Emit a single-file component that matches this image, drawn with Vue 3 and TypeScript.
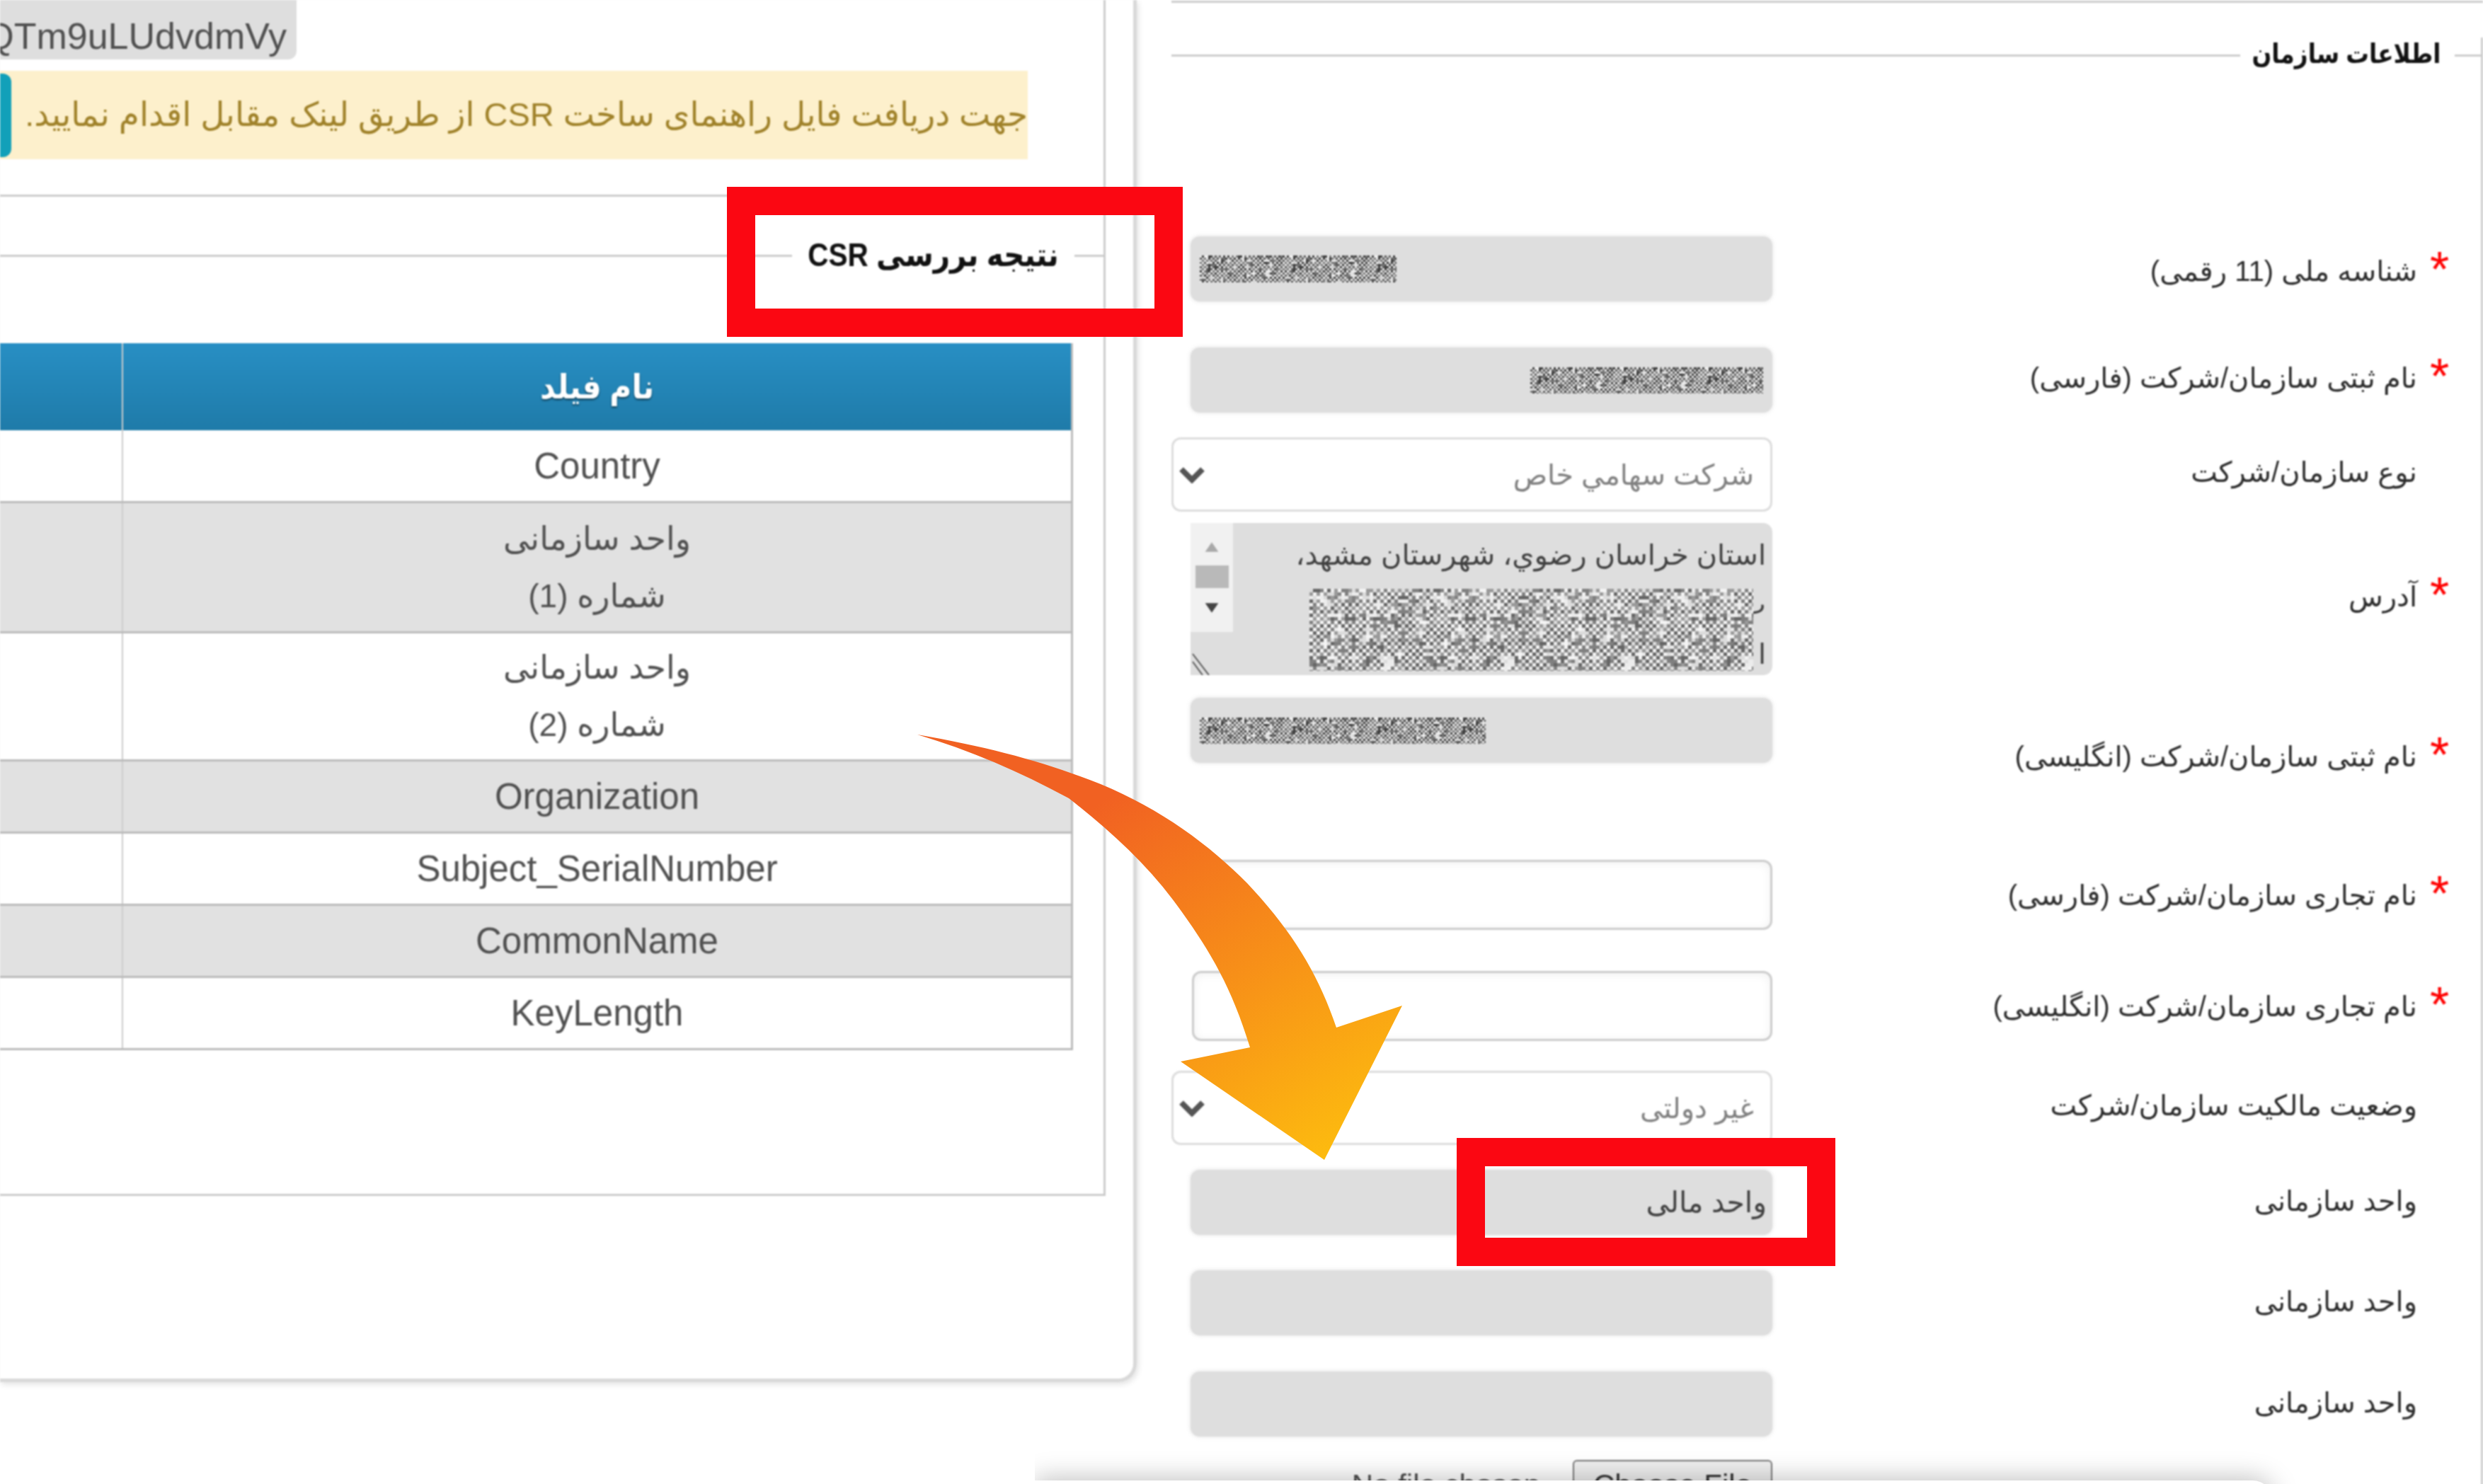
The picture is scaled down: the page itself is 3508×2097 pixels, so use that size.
<script setup lang="ts">
function noise(cols: number, rows: number, cell: number, seed: number, dark: string[], light: string[]) {
  let s = seed
  const next = () => {
    s = (s * 1664525 + 1013904223) >>> 0
    return (s >>> 8) / 16777216
  }
  const out: { x: number; y: number; w: number; c: string }[] = []
  for (let r = 0; r < rows; r++) {
    for (let c = 0; c < cols; c++) {
      const odd = (r + c) % 2 === 1
      const flip = next() < 0.12
      const set = odd !== flip ? dark : light
      out.push({ x: c * cell, y: r * cell, w: cell, c: set[Math.floor(next() * set.length)] })
    }
  }
  return out
}
const fine = noise(40, 19, 3, 11, ['#3a3a3a', '#5a5a5a', '#777'], ['#e8e8e8', '#d0d0d0', '#f2f2f2'])
const coarse = noise(34, 34, 5, 37, ['#666', '#808080', '#9a9a9a'], ['#ececec', '#dcdcdc', '#f4f4f4'])

interface Row { label: string; req?: boolean; kind: string; value?: string; low?: boolean }
const rows: Row[] = [
  { label: 'شناسه ملی (11 رقمی)', req: true, kind: 'idn' },
  { label: 'نام ثبتی سازمان/شرکت (فارسی)', req: true, kind: 'fa' },
  { label: 'نوع سازمان/شرکت', kind: 'select', value: 'شرکت سهامي خاص' },
  { label: 'آدرس', req: true, kind: 'area' },
  { label: 'نام ثبتی سازمان/شرکت (انگلیسی)', req: true, kind: 'en', low: true },
  { label: 'نام تجاری سازمان/شرکت (فارسی)', req: true, kind: 'white' },
  { label: 'نام تجاری سازمان/شرکت (انگلیسی)', req: true, kind: 'white' },
  { label: 'وضعیت مالکیت سازمان/شرکت', kind: 'select', value: 'غیر دولتی' },
  { label: 'واحد سازمانی', kind: 'gray', value: 'واحد مالی' },
  { label: 'واحد سازمانی', kind: 'gray' },
  { label: 'واحد سازمانی', kind: 'gray' }
]
const tableRows: string[][] = [
  ['Country'],
  ['واحد سازمانی', 'شماره (1)'],
  ['واحد سازمانی', 'شماره (2)'],
  ['Organization'],
  ['Subject_SerialNumber'],
  ['CommonName'],
  ['KeyLength']
]
</script>

<template>
  <div class="page">
    <svg class="defs" width="0" height="0" aria-hidden="true">
      <defs>
        <pattern id="noiseFine" patternUnits="userSpaceOnUse" width="120" height="57">
          <rect v-for="(p, i) in fine" :key="i" :x="p.x" :y="p.y" :width="p.w" :height="p.w" :fill="p.c" />
        </pattern>
        <pattern id="noiseCoarse" patternUnits="userSpaceOnUse" width="170" height="170">
          <rect v-for="(p, i) in coarse" :key="i" :x="p.x" :y="p.y" :width="p.w" :height="p.w" :fill="p.c" />
        </pattern>
      </defs>
    </svg>

    <section class="card">
      <div class="panel">
        <div class="top">
          <div class="code"><span>QTm9uLUdvdmVy</span></div>
          <div class="alert">
            <i class="teal"></i>
            <p>جهت دریافت فایل راهنمای ساخت CSR از طریق لینک مقابل اقدام نمایید.</p>
          </div>
        </div>
        <div class="legend result">
          <span class="rule"></span>
          <b>نتیجه بررسی CSR</b>
          <span class="stub"></span>
        </div>
        <table class="grid">
          <colgroup><col class="c0" /><col /></colgroup>
          <thead>
            <tr><th></th><th><span>نام فیلد</span></th></tr>
          </thead>
          <tbody>
            <tr v-for="(r, i) in tableRows" :key="i" :class="{ tall: r.length > 1 }">
              <td></td>
              <td><template v-for="(t, j) in r" :key="j"><div>{{ t }}</div></template></td>
            </tr>
          </tbody>
        </table>
      </div>
    </section>

    <section class="side">
      <div class="topline"></div>
      <div class="org">
        <div class="legend orglegend">
          <span class="rule"></span>
          <b>اطلاعات سازمان</b>
          <span class="stub"></span>
        </div>
        <div class="form">
          <div v-for="(r, i) in rows" :key="i" class="row" :class="{ low: r.low }">
            <div class="field">
              <div v-if="r.kind === 'idn'" class="input gray ltr">
                <svg class="censor c1"><rect width="100%" height="100%" fill="url(#noiseFine)" /></svg>
              </div>
              <div v-else-if="r.kind === 'fa'" class="input gray rtl">
                <svg class="censor c2"><rect width="100%" height="100%" fill="url(#noiseFine)" /></svg>
              </div>
              <div v-else-if="r.kind === 'en'" class="input gray ltr">
                <svg class="censor c3"><rect width="100%" height="100%" fill="url(#noiseFine)" /></svg>
              </div>
              <div v-else-if="r.kind === 'select'" class="select">
                <svg class="chev" viewBox="0 0 36 24"><path d="M3 4 L18 19 L33 4" fill="none" stroke="#555" stroke-width="8" /></svg>
                <span>{{ r.value }}</span>
              </div>
              <div v-else-if="r.kind === 'area'" class="area">
                <div class="bar">
                  <svg class="arrow up" viewBox="0 0 30 24"><path d="M15 2 L29 22 L1 22 Z" fill="#a9a9a9" /></svg>
                  <i class="thumb"></i>
                  <svg class="arrow down" viewBox="0 0 30 24"><path d="M1 2 L29 2 L15 22 Z" fill="#444" /></svg>
                </div>
                <svg class="grip" viewBox="0 0 34 34"><path d="M3 4 L26 34 M3 15 L17 34" stroke="#555" stroke-width="2" fill="none" /></svg>
                <div class="lines">
                  <div>استان خراسان رضوي، شهرستان مشهد،</div>
                  <div>ب</div>
                  <div>ا</div>
                  <div class="last">ن</div>
                </div>
                <svg class="censor c4"><rect width="100%" height="100%" fill="url(#noiseCoarse)" /></svg>
              </div>
              <div v-else-if="r.kind === 'white'" class="input white"></div>
              <div v-else class="input gray rtl"><span class="val">{{ r.value }}</span></div>
            </div>
            <div class="lab">
              <span>{{ r.label }}</span>
              <em class="slot"><i v-if="r.req">*</i></em>
            </div>
          </div>
          <div class="row">
            <div class="field file">
              <span>No file chosen</span>
              <button type="button">Choose File</button>
            </div>
          </div>
        </div>
      </div>
    </section>

    <div class="redbox rb1"></div>
    <div class="redbox rb2"></div>

    <svg class="curve" viewBox="0 0 3508 2097">
      <defs>
        <linearGradient id="arrowGrad" gradientUnits="userSpaceOnUse" x1="1560" y1="1130" x2="1870" y2="1640">
          <stop offset="0" stop-color="#f16122" />
          <stop offset="1" stop-color="#fdbb0f" />
        </linearGradient>
      </defs>
      <path
        d="M1296 1038 C1400 1056 1480 1078 1555 1108 C1640 1143 1710 1195 1762 1248 C1825 1315 1862 1375 1888 1452 L1981 1421 L1871 1639 L1668 1500 L1766 1480 C1740 1395 1710 1345 1670 1289 C1625 1225 1570 1175 1510 1128 C1440 1090 1370 1060 1296 1038 Z"
        fill="url(#arrowGrad)"
      />
    </svg>

    <div class="veil"><div class="sheet"></div></div>
  </div>
</template>

<style>
html, body { margin: 0; background: #fff; }
</style>

<style scoped>
.page {
  position: relative;
  display: flex;
  width: 3508px;
  height: 2097px;
  overflow: hidden;
  background: #fff;
  font-family: "Liberation Sans", "DejaVu Sans", sans-serif;
  color: #505050;
}
.defs { position: absolute; }

/* left card */
.card {
  box-sizing: border-box;
  flex: 0 0 1606px;
  height: 1953px;
  border-right: 5px solid #d9d9d9;
  border-bottom: 5px solid #d9d9d9;
  border-radius: 0 0 26px 0;
  box-shadow: 2px 3px 8px rgba(0, 0, 0, .12);
  filter: blur(1px);
}
.panel {
  box-sizing: border-box;
  width: 1562px;
  height: 1690px;
  border-right: 3px solid #ccc;
  border-bottom: 3px solid #ccc;
}
.top {
  box-sizing: border-box;
  height: 278px;
  border-bottom: 3px solid #ccc;
}
.code {
  box-sizing: border-box;
  display: flex;
  justify-content: flex-end;
  align-items: flex-end;
  width: 419px;
  height: 84px;
  padding: 0 14px 3px 0;
  overflow: hidden;
  background: #dedede;
  border-radius: 0 0 12px 0;
  font-size: 52px;
  line-height: 60px;
  color: #505050;
  white-space: nowrap;
}
.alert {
  display: flex;
  align-items: center;
  justify-content: space-between;
  width: 1452px;
  height: 125px;
  margin-top: 16px;
  background: #fdf0cc;
}
.teal {
  display: block;
  width: 16px;
  height: 118px;
  border-radius: 0 12px 12px 0;
  background: #12a0b9;
}
.alert p {
  margin: -3px 0 0;
  direction: rtl;
  font-size: 47px;
  color: #a0822a;
  white-space: nowrap;
}
.legend {
  display: flex;
  align-items: center;
  height: 50px;
}
.legend b {
  display: block;
  color: #111;
  direction: rtl;
  white-space: nowrap;
  transform-origin: right center;
}
.rule { flex: 1; border-top: 3px solid #ccc; }
.stub { flex: 0 0 41px; border-top: 3px solid #ccc; }
.result { margin-top: 58px; }
.result b {
  margin: -3px 22px 0 -26px;
  font-size: 46px;
  transform: scaleX(.88);
}

.grid {
  width: 1516px;
  margin-top: 99px;
  border-collapse: collapse;
  table-layout: fixed;
  font-size: 51px;
  text-align: center;
  border-right: 3px solid #bbb;
}
.c0 { width: 173px; }
th, td { padding: 0; border-left: 2px solid #ccc; }
th:first-child, td:first-child { border-left: 0; }
th {
  height: 123px;
  background: linear-gradient(#288fc4, #1f7ba9);
  color: #fff;
  font-size: 47px;
  text-shadow: 0 2px 3px rgba(0, 0, 0, .55);
  direction: rtl;
}
th span { display: inline-block; margin-top: -3px; transform: scaleX(.9); }
td { height: 99px; border-bottom: 3px solid #bbb; }
tbody tr:first-child td { height: 100px; }
tr.tall td { height: 178px; font-size: 46px; direction: rtl; line-height: 81px; }
tbody tr:nth-child(2) td { height: 181px; }
tbody tr:nth-child(even) td { background: #e1e1e1; }

/* right side */
.side {
  flex: 1;
  min-width: 0;
  margin-left: 49px;
  filter: blur(1px);
}
.topline { height: 0; margin-top: 1px; border-top: 3px solid #ccc; }
.org {
  height: 2100px;
  margin-top: 74px;
  border-right: 3px solid #ccc;
}
.orglegend { margin-top: -25px; }
.orglegend b {
  margin: -4px 20px 0 -27px;
  font-size: 38px;
  transform: scaleX(.86);
}
.orglegend .stub { flex-basis: 37px; }
.form {
  display: grid;
  grid-template-rows: 157px 127px 121px 247px 229px 157px 141px 140px 142px 143px 125px auto;
  align-items: start;
  margin-top: 231px;
}
.row { display: flex; align-items: center; }
.row.low { align-items: flex-start; }
.field { flex: 0 0 849px; box-sizing: border-box; }
.input {
  box-sizing: border-box;
  display: flex;
  align-items: center;
  height: 92px;
  margin-left: 27px;
  padding: 0 13px;
  border-radius: 13px;
}
.gray { background: #dedede; box-shadow: 0 0 6px #e2e2e2; }
.ltr { justify-content: flex-start; }
.rtl { justify-content: flex-end; }
.white {
  height: 99px;
  margin-left: 29px;
  background: #fff;
  border: 3px solid #ccc;
  box-shadow: inset 0 2px 14px rgba(0, 0, 0, .06);
}
.val { direction: rtl; margin-right: -5px; font-size: 41px; color: #404040; }
.censor { display: block; filter: blur(.5px); }
.c1 { width: 278px; height: 38px; }
.c2 { width: 329px; height: 37px; }
.c3 { width: 404px; height: 37px; }
.select {
  box-sizing: border-box;
  display: flex;
  align-items: center;
  justify-content: space-between;
  height: 105px;
  padding: 0 23px 0 8px;
  background: #fff;
  border: 3px solid #ddd;
  border-radius: 13px;
  direction: ltr;
  font-size: 40px;
  color: #808080;
}
.select span { direction: rtl; }
.chev { width: 36px; height: 24px; }
.area {
  position: relative;
  display: flex;
  box-sizing: border-box;
  height: 215px;
  margin-left: 27px;
  overflow: hidden;
  background: #dedede;
  border-radius: 0 13px 13px 0;
}
.bar {
  position: absolute;
  left: 0;
  top: 0;
  display: flex;
  flex-direction: column;
  align-items: center;
  box-sizing: border-box;
  width: 60px;
  height: 154px;
  padding-top: 26px;
  background: #f1f1f1;
}
.arrow { width: 26px; height: 16px; }
.thumb { display: block; width: 47px; height: 32px; margin: 18px 0 20px; background: #b9b9b9; }
.grip { position: absolute; left: 0; bottom: 0; width: 34px; height: 34px; }
.lines {
  flex: 1;
  padding: 10px 9px 0 0;
  direction: rtl;
  font-size: 40px;
  line-height: 70px;
  color: #404040;
  white-space: nowrap;
}
.last { padding-right: 640px; }
.c4 { position: absolute; left: 168px; top: 93px; width: 627px; height: 116px; }
.lab {
  flex: 1;
  display: flex;
  align-items: center;
  justify-content: flex-end;
  direction: ltr;
  font-size: 40px;
  color: #2c2c2c;
}
.lab span { direction: rtl; white-space: nowrap; }
.low .lab { margin-top: 58px; }
.row:nth-child(1) .lab { margin-top: 6px; }
.row:nth-child(2) .lab { margin-top: -6px; }
.row:nth-child(3) .lab,
.row:nth-child(4) .lab,
.row:nth-child(8) .lab { margin-top: -8px; }
.row:nth-child(9) .lab,
.row:nth-child(10) .lab,
.row:nth-child(11) .lab { margin-top: -4px; }
.slot {
  display: block;
  flex: 0 0 90px;
  box-sizing: border-box;
  height: 50px;
  padding-left: 18px;
  font-style: normal;
}
.slot i {
  display: block;
  margin-top: -12px;
  font-size: 70px;
  font-style: normal;
  line-height: 70px;
  color: #f00;
}
.file {
  display: flex;
  align-items: flex-start;
  justify-content: flex-end;
  gap: 46px;
  font-size: 42px;
}
.file span { margin-top: 12px; }
.file button {
  box-sizing: border-box;
  width: 282px;
  height: 72px;
  padding: 0;
  background: #efefef;
  border: 2px solid #777;
  border-radius: 6px;
  font: 42px "Liberation Sans", sans-serif;
  color: #333;
}

/* overlays */
.redbox {
  position: absolute;
  box-sizing: border-box;
  border: 40px solid #fb0712;
}
.rb1 { left: 1027px; top: 264px; width: 644px; height: 212px; }
.rb2 { left: 2058px; top: 1608px; width: 535px; height: 181px; }
.curve { position: absolute; left: 0; top: 0; width: 3508px; height: 2097px; pointer-events: none; }
.veil {
  position: absolute;
  left: 1462px;
  top: 2040px;
  width: 1800px;
  height: 57px;
  overflow: hidden;
}
.sheet {
  position: absolute;
  left: 0;
  top: 52px;
  width: 1750px;
  height: 40px;
  background: #fff;
  border-radius: 0 30px 0 0;
  box-shadow: 0 -3px 36px rgba(0, 0, 0, .25);
}
</style>
